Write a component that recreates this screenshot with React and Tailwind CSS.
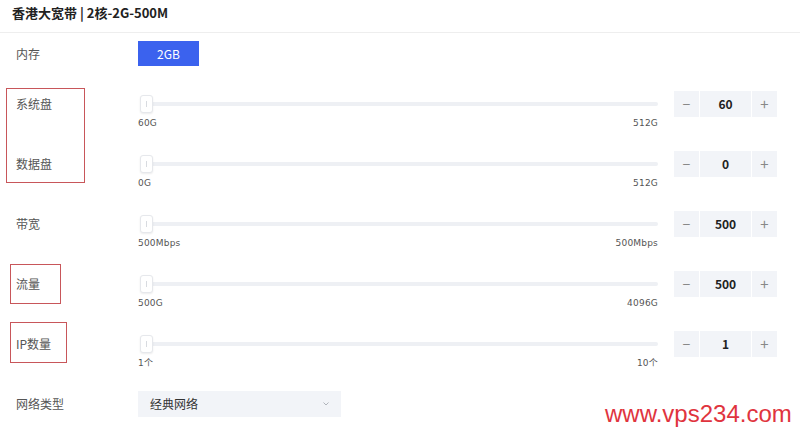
import React from "react";

const font = { fontFamily: '"Noto Sans CJK SC", "Noto Sans", sans-serif' };

function Slider({ min, max }) {
  return (
    <div className="w-[522px] flex flex-col">
      <div className="relative h-[26px] flex items-center">
        <div className="ml-[8px] w-[512px] h-[4px] rounded-full bg-[#eef0f4]" />
        <div className="absolute left-[2px] top-[4px] w-[13px] h-[18px] rounded-[3px] bg-white border border-[#e6e8ec] shadow-[0_1px_2px_rgba(0,0,0,0.08)] flex items-center justify-center">
          <div className="w-[1px] h-[6px] bg-[#d8dbe0]" />
        </div>
      </div>
      <div className="flex justify-between pr-[2px] text-[9px] leading-[12px] text-[#555] tracking-[0.2px]" style={{ fontFamily: '"DejaVu Sans", "Noto Sans CJK SC", sans-serif' }}>
        <span>{min}</span>
        <span>{max}</span>
      </div>
    </div>
  );
}

function Stepper({ value }) {
  return (
    <div className="ml-[14px] flex h-[26px] w-[103px] gap-[1px] bg-white text-[#888]">
      <div className="w-[25px] bg-[#f2f4f8] flex items-center justify-center text-[14px]">−</div>
      <div className="w-[51px] bg-[#f2f4f8] flex items-center justify-center text-[12px] font-bold text-[#222]">{value}</div>
      <div className="w-[25px] bg-[#f2f4f8] flex items-center justify-center text-[15px]">+</div>
    </div>
  );
}

function SliderRow({ label, min, max, value }) {
  return (
    <div className="flex h-[60px] items-start">
      <div className="w-[138px] pl-[16px] h-[26px] flex items-center text-[12px] text-[#555]">{label}</div>
      <Slider min={min} max={max} />
      <Stepper value={value} />
    </div>
  );
}

export default function App() {
  return (
    <div className="relative w-[800px] h-[433px] overflow-hidden bg-white" style={font}>
      <div className="h-[33px] border-b border-[#eeeeee] pl-[12px] pb-[6px] flex items-center">
        <span className="text-[13px] font-semibold text-[#222]">香港大宽带 | 2核-2G-500M</span>
      </div>
      <div className="flex items-center mt-[8px] h-[25px]">
        <div className="w-[138px] pl-[16px] text-[12px] text-[#555]">内存</div>
        <div className="w-[61px] h-[25px] bg-[#3b62ee] text-white text-[12px] flex items-center justify-center">2GB</div>
      </div>
      <div className="mt-[25px]">
        <SliderRow label="系统盘" min="60G" max="512G" value="60" />
        <SliderRow label="数据盘" min="0G" max="512G" value="0" />
        <SliderRow label="带宽" min="500Mbps" max="500Mbps" value="500" />
        <SliderRow label="流量" min="500G" max="4096G" value="500" />
        <SliderRow label="IP数量" min="1个" max="10个" value="1" />
        <div className="flex items-center h-[26px]">
          <div className="w-[138px] pl-[16px] text-[12px] text-[#555]">网络类型</div>
          <div className="w-[203px] h-[26px] bg-[#f2f4f8] flex items-center justify-between pl-[12px] pr-[12px] text-[12px] text-[#333]">
            <span>经典网络</span>
            <svg width="6" height="4" viewBox="0 0 6 4"><path d="M0.5 0.5 L3 3 L5.5 0.5" stroke="#b0b4bb" strokeWidth="1" fill="none" /></svg>
          </div>
        </div>
      </div>

      <div className="absolute left-[6px] top-[88px] w-[79px] h-[95px] border-[1.5px] border-[#c8565a]" />
      <div className="absolute left-[10px] top-[264px] w-[51px] h-[40px] border-[1.5px] border-[#c8565a]" />
      <div className="absolute left-[10px] top-[322px] w-[57px] h-[41px] border-[1.5px] border-[#c8565a]" />

      <div className="absolute left-[605px] top-[399px] text-[24px] leading-[30px] text-[#e0343e]" style={{ fontFamily: '"Liberation Sans", Arial, sans-serif' }}>
        www.vps234.com
      </div>
    </div>
  );
}
